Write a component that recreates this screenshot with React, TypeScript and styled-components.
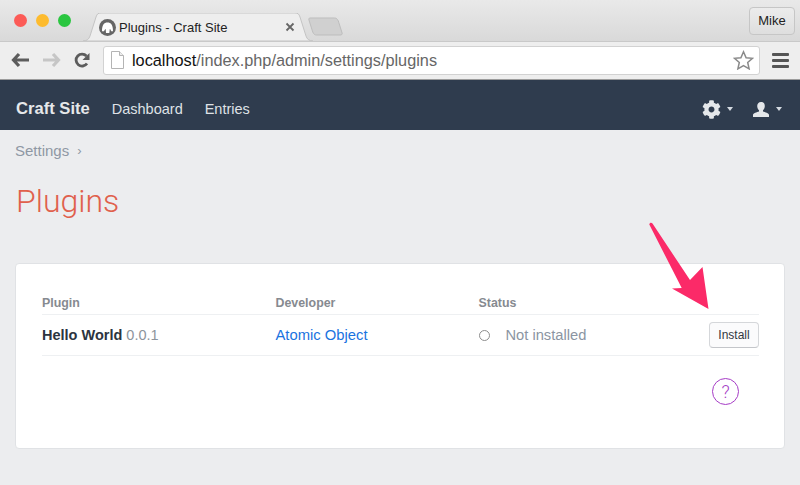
import styled, { createGlobalStyle } from 'styled-components';
import { FaCog } from 'react-icons/fa';

const GlobalStyle = createGlobalStyle`
  html, body {
    margin: 0;
    padding: 0;
    background: #ecedef;
    font-family: "Liberation Sans", Arial, sans-serif;
  }
`;

const Page = styled.div`
  position: relative;
  width: 800px;
  height: 485px;
  overflow: hidden;
  background: #ecedef;
`;

const TitleBar = styled.div`
  display: flex;
  align-items: flex-end;
  height: 41px;
  box-sizing: border-box;
  padding-right: 5px;
  background: linear-gradient(#e9e9e9, #d9d9d9);
`;

const Lights = styled.div`
  display: flex;
  gap: 9px;
  align-self: flex-start;
  margin: 14px 0 0 14px;
  width: 69px;
`;

const Light = styled.span<{ $color: string }>`
  width: 13px;
  height: 13px;
  border-radius: 50%;
  background: ${p => p.$color};
`;

const Tab = styled.div`
  position: relative;
  display: flex;
  align-items: center;
  width: 230px;
  height: 28px;
  box-sizing: border-box;
  padding: 0 17px 0 16px;
`;

const TabShape = styled.svg`
  position: absolute;
  left: 0;
  top: 0;
`;

const Favicon = styled.svg`
  position: relative;
  flex: none;
`;

const TabTitle = styled.span`
  position: relative;
  margin-left: 3px;
  font-size: 13px;
  color: #222;
`;

const TabClose = styled.svg`
  position: relative;
  margin-left: auto;
  margin-right: 1px;
`;

const NewTab = styled.svg`
  margin: 0 0 5px -5px;
`;

const Profile = styled.div`
  align-self: flex-start;
  margin: 7px 0 0 auto;
  width: 46px;
  height: 28px;
  box-sizing: border-box;
  border: 1px solid #c6c6c6;
  border-radius: 4px;
  background: linear-gradient(#ececec, #dedede);
  font-size: 13px;
  line-height: 26px;
  text-align: center;
  color: #222;
`;

const Toolbar = styled.div`
  display: flex;
  align-items: center;
  height: 39px;
  box-sizing: border-box;
  padding: 0 11px 1px;
  background: #eeeeee;
  border-top: 1px solid #c9c9c9;
  border-bottom: 1px solid #9c9c9c;
`;

const NavIcon = styled.svg<{ $gap: number }>`
  flex: none;
  margin-right: ${p => p.$gap}px;
`;

const Address = styled.div`
  display: flex;
  align-items: center;
  width: 657px;
  height: 29px;
  box-sizing: border-box;
  padding: 0 5px 0 7px;
  background: #fff;
  border: 1px solid #d2d2d2;
  border-radius: 3px;
`;

const Url = styled.span`
  margin-left: 8px;
  font-size: 16.3px;
  color: #666;
  white-space: nowrap;
  b {
    font-weight: 400;
    color: #111;
  }
`;

const Star = styled.svg`
  margin-left: auto;
`;

const Menu = styled.div`
  display: flex;
  flex-direction: column;
  gap: 3px;
  margin-left: 12px;
  span {
    width: 17px;
    height: 3px;
    border-radius: 1px;
    background: #555;
  }
`;

const Navbar = styled.nav`
  display: flex;
  align-items: center;
  height: 50px;
  box-sizing: border-box;
  padding: 8px 16px 0;
  background: #2f3c4e;
`;

const Brand = styled.a`
  font-size: 16.6px;
  font-weight: 700;
  color: #e6e8ea;
`;

const NavLink = styled.a`
  margin-left: 22px;
  font-size: 14.5px;
  color: #dfe2e6;
`;

const NavTools = styled.div`
  display: flex;
  align-items: center;
  margin-left: auto;
  padding-right: 2px;
`;

const Caret = styled.span<{ $gap: number }>`
  width: 0;
  height: 0;
  margin-left: ${p => p.$gap}px;
  border-left: 3.5px solid transparent;
  border-right: 3.5px solid transparent;
  border-top: 4px solid #d5dbe2;
`;

const UserIcon = styled.svg`
  margin-left: 20px;
`;

const Main = styled.main`
  padding: 10px 15px 0;
`;

const Crumbs = styled.div`
  display: flex;
  align-items: center;
  height: 20px;
  font-size: 15px;
  color: #8f98a4;
  i {
    margin-left: 8px;
    font-style: normal;
    font-size: 13px;
  }
`;

const Heading = styled.h1`
  margin: 21px 0 0 1px;
  font-family: Roboto, "Liberation Sans", sans-serif;
  font-size: 32px;
  font-weight: 300;
  line-height: 40px;
  color: #e0604c;
`;

const Card = styled.section`
  height: 186px;
  margin-top: 42px;
  box-sizing: border-box;
  padding: 28px 25px 0 26px;
  background: #fff;
  border: 1px solid #e0e2e5;
  border-radius: 4px;
`;

const Row = styled.div<{ $height: number }>`
  display: grid;
  grid-template-columns: 233.5px 203px 1fr auto;
  align-items: center;
  height: ${p => p.$height}px;
  box-sizing: border-box;
  border-bottom: 1px solid #eef0f2;
`;

const HeadCell = styled.div`
  font-size: 12.4px;
  font-weight: 700;
  color: #868a90;
`;

const Name = styled.div`
  font-size: 14.5px;
  font-weight: 700;
  color: #2c3440;
  span {
    font-weight: 400;
    color: #8d949c;
  }
`;

const DevLink = styled.a`
  font-size: 14.8px;
  color: #1a73e0;
`;

const Status = styled.div`
  display: flex;
  align-items: center;
  font-size: 14.7px;
  color: #8b95a2;
`;

const StatusDot = styled.span`
  width: 9px;
  height: 9px;
  margin-right: 16px;
  border: 1px solid #8d8d8d;
  border-radius: 50%;
`;

const InstallButton = styled.button`
  width: 50px;
  height: 26px;
  padding: 0;
  background: #fbfbfc;
  border: 1px solid #d5d7da;
  border-bottom-color: #c4c6ca;
  border-radius: 4px;
  font-family: inherit;
  font-size: 12px;
  color: #33383f;
`;

const HelpWrap = styled.div`
  display: flex;
  justify-content: flex-end;
  margin: 22px 20px 0 0;
`;

const Help = styled.span`
  width: 25px;
  height: 25px;
  border: 1px solid #a63cc6;
  border-radius: 50%;
  font-family: Roboto, "Liberation Sans", sans-serif;
  font-size: 18px;
  font-weight: 300;
  line-height: 25px;
  text-align: center;
  color: #a63cc6;
`;

const Arrow = styled.svg`
  position: absolute;
  left: 640px;
  top: 215px;
`;

const App = () => {
  return (
    <Page>
      <GlobalStyle />
      <TitleBar>
        <Lights>
          <Light $color="#fc5b57" />
          <Light $color="#fdbb2e" />
          <Light $color="#2ac640" />
        </Lights>
        <Tab>
          <TabShape width="230" height="28" viewBox="0 0 230 28">
            <path
              d="M0 28c4 0 6-2 7-5L13 4c1-3 2-4 5-4h194c3 0 4 1 5 4l6 19c1 3 3 5 7 5z"
              fill="#eeeeee"
              stroke="#c4c4c4"
            />
          </TabShape>
          <Favicon width="17" height="17" viewBox="0 0 17 17">
            <circle cx="8.500" cy="8.500" r="8.500" fill="#666" />
            <path d="M3 12C3 6 5 3.500 8.500 3.500S14 6 14 12c-1.200 1-2.200 0-2.500-1.500l-.7-.5-.5 4H7l-.3-4-.7.500C5.500 12 4.200 13 3 12z" fill="#fff" />
          </Favicon>
          <TabTitle>Plugins - Craft Site</TabTitle>
          <TabClose width="10" height="10" viewBox="0 0 10 10">
            <path d="M1.500 1.500l7 7M8.500 1.500l-7 7" stroke="#666" strokeWidth="1.800" />
          </TabClose>
        </Tab>
        <NewTab width="36" height="19" viewBox="0 0 38 19" preserveAspectRatio="none">
          <path d="M2 1h26c2 0 3 1 4 3l4 12c.4 1.500-.5 2-2 2H9c-2 0-3-1-4-3L1 3c-.4-1 0-2 1-2z" fill="#d0d0d0" stroke="#bcbcbc" />
        </NewTab>
        <Profile>Mike</Profile>
      </TitleBar>
      <Toolbar>
        <NavIcon $gap={14} width="18" height="16" viewBox="0 0 18 16">
          <path d="M8 2L2.500 8 8 14M3 8h15" fill="none" stroke="#5c5c5c" strokeWidth="3.200" />
        </NavIcon>
        <NavIcon $gap={13} width="18" height="16" viewBox="0 0 18 16">
          <path d="M10 2l5.500 6L10 14M15 8H0" fill="none" stroke="#c6c6c6" strokeWidth="3.200" />
        </NavIcon>
        <NavIcon $gap={13} width="16" height="16" viewBox="0 0 16 16">
          <path d="M13 11.500A6 6 0 1 1 12.500 4" fill="none" stroke="#5c5c5c" strokeWidth="2.800" />
          <path d="M15.500 1v7h-7z" fill="#5c5c5c" />
        </NavIcon>
        <Address>
          <svg width="13" height="18" viewBox="0 0 13 18">
            <path d="M.5.5h8l4 4v13H.5z" fill="#fff" stroke="#b4b4b4" />
            <path d="M8.500.5v4h4" fill="#eee" stroke="#b4b4b4" />
          </svg>
          <Url>
            <b>localhost</b>/index.php/admin/settings/plugins
          </Url>
          <Star width="21" height="20" viewBox="0 0 21 20">
            <path d="M10.500 1.800l2.600 5.900 6.400.6-4.800 4.200 1.400 6.300-5.600-3.300-5.600 3.300 1.400-6.300L1.500 8.300l6.400-.6z" fill="#fff" stroke="#8a8a8a" strokeWidth="1.500" />
          </Star>
        </Address>
        <Menu>
          <span />
          <span />
          <span />
        </Menu>
      </Toolbar>
      <Navbar>
        <Brand>Craft Site</Brand>
        <NavLink>Dashboard</NavLink>
        <NavLink>Entries</NavLink>
        <NavTools>
          <FaCog size={19} color="#e4e7ea" />
          <Caret $gap={6} />
          <UserIcon width="16" height="15" viewBox="0 0 16 15">
            <path d="M8 0c2.400 0 3.800 1.700 3.800 4 0 1.800-.8 3.300-1.800 4.200v1.300c2 .7 6 1.500 6 3.500v2H0v-2c0-2 4-2.800 6-3.500V8.200C5 7.300 4.200 5.800 4.200 4 4.200 1.700 5.600 0 8 0z" fill="#e4e7ea" />
          </UserIcon>
          <Caret $gap={7} />
        </NavTools>
      </Navbar>
      <Main>
        <Crumbs>
          Settings <i>›</i>
        </Crumbs>
        <Heading>Plugins</Heading>
        <Card>
          <Row $height={23}>
            <HeadCell>Plugin</HeadCell>
            <HeadCell>Developer</HeadCell>
            <HeadCell>Status</HeadCell>
          </Row>
          <Row $height={41}>
            <Name>
              Hello World <span>0.0.1</span>
            </Name>
            <DevLink>Atomic Object</DevLink>
            <Status>
              <StatusDot />
              Not installed
            </Status>
            <InstallButton>Install</InstallButton>
          </Row>
          <HelpWrap>
            <Help>?</Help>
          </HelpWrap>
        </Card>
      </Main>
      <Arrow width="80" height="100" viewBox="640 215 80 100">
        <path d="M649.300 224.500c.3-1.700 2-2.300 3.200-.9L690 280l12.500-13 6 42-36.500-20.500 9.700-.5z" fill="#fb2a68" />
      </Arrow>
    </Page>
  );
};

export default App;
